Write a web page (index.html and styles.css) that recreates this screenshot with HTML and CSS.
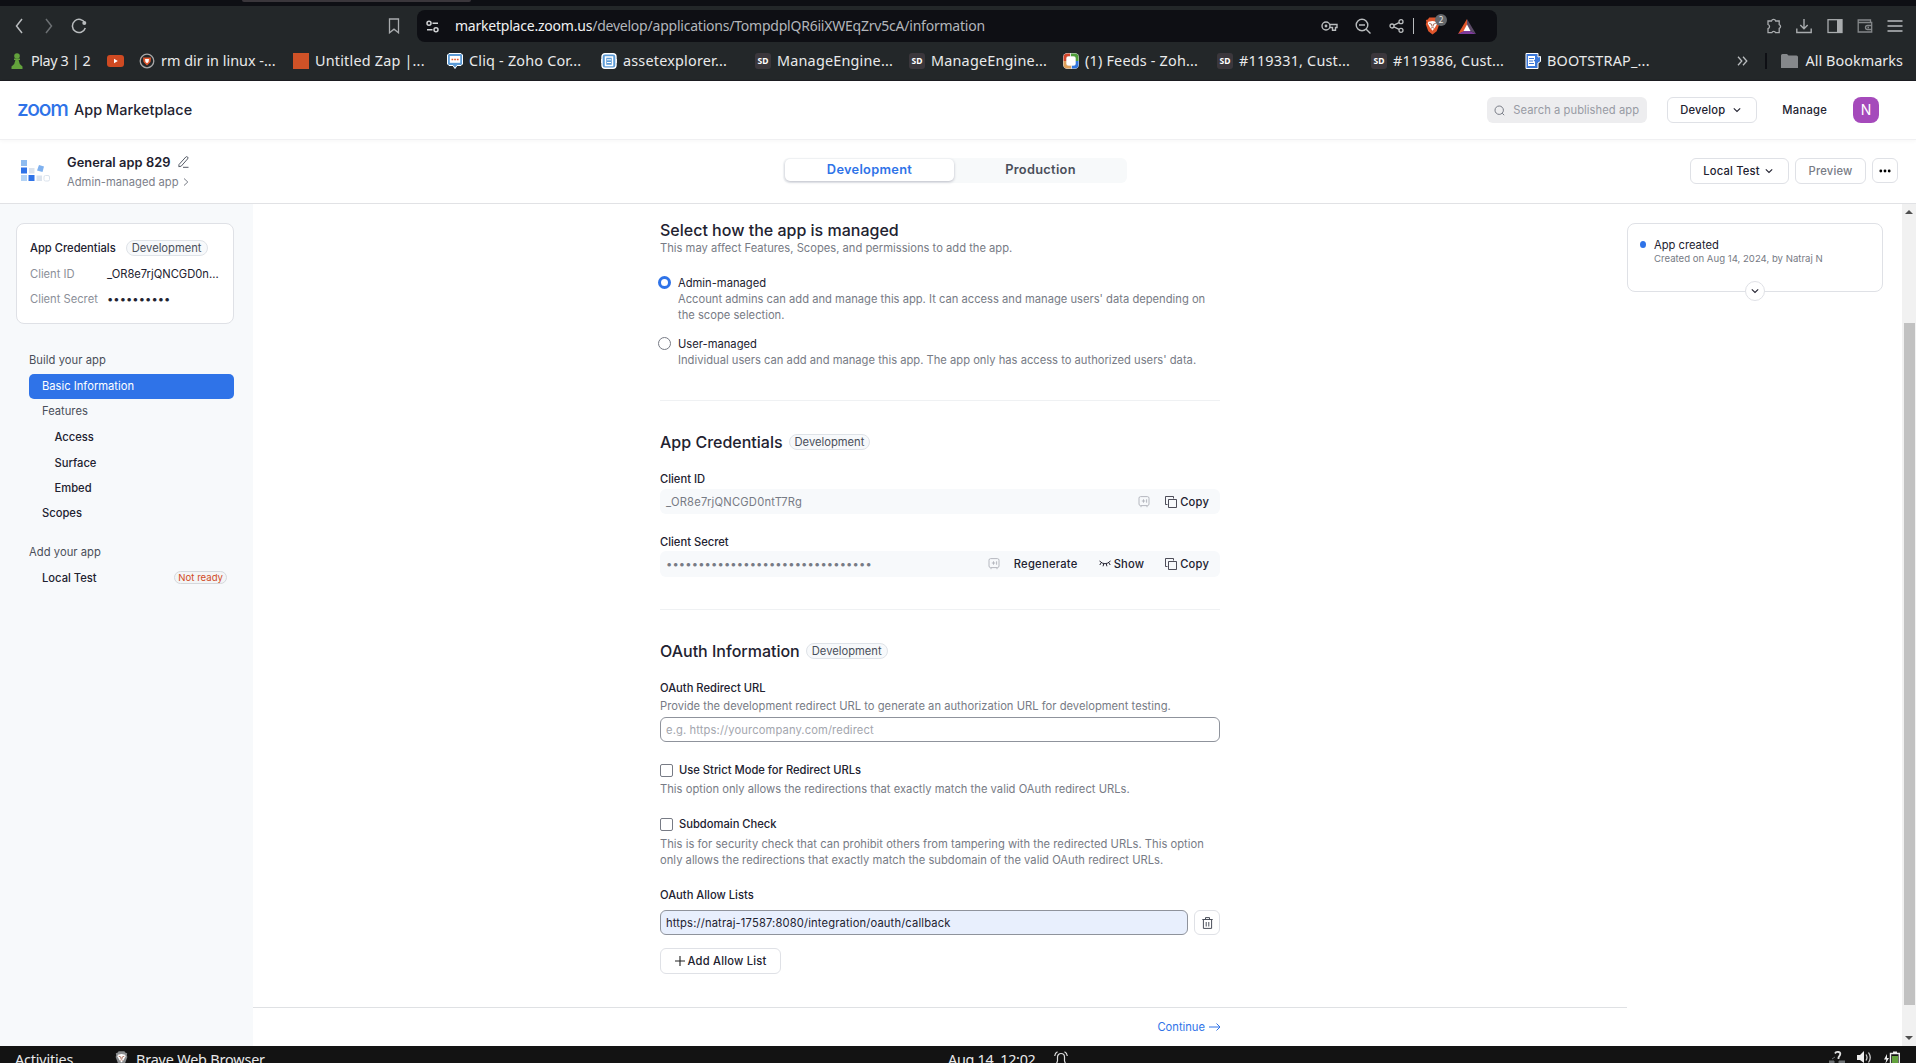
FILE: index.html
```
<!DOCTYPE html>
<html lang="en">
<head>
  <meta charset="UTF-8">
  <title>App Marketplace</title>
  <link rel="stylesheet" href="styles.css">
</head>
<body>
  <!-- icons that are used more than once -->
  <svg width="0" height="0" class="defs">
    <symbol id="chev" viewBox="0 0 10 10"><path d="M1.8 3.3L5 6.5l3.2-3.2" fill="none" stroke="currentColor" stroke-width="1.1"/></symbol>
    <symbol id="copy" viewBox="0 0 12 12"><path d="M2.500 8.500h-2V.5h8v2M3.500 3.500h8v8h-8z" fill="none" stroke="currentColor" stroke-width=".8"/></symbol>
    <symbol id="vault" viewBox="0 0 12 12"><rect x="1" y=".6" width="10" height="9" rx="1.600" fill="none" stroke="currentColor"/><path d="M3 9.800v1.400M9 9.800v1.400M3.800 5h3.400M5.500 3.300v3.400M8.600 3.300v3.400" fill="none" stroke="currentColor"/></symbol>
    <symbol id="lion" viewBox="0 0 16 18"><path d="M4.500 0h7L13 2l2 .5-.5 2.500.7 2-2.700 7.500L8 18l-4.500-3.500L.8 7l.7-2L1 2.500 3 2z"/><path d="M3.500 4.500L8 3.600l4.500.9.5 2-2.500 4.300L8 14l-2.500-3.200L3 6.500z" fill="#fff"/><path d="M4.500 6.200L7 7l.4 2.500M11.500 6.200L9 7l-.4 2.500M6.500 11.300L8 10.500l1.500.8" fill="none" stroke="#8a3b22" stroke-width=".8"/></symbol>
  </svg>

  <div class="browser">
    <div class="tabstrip"><div class="tab"></div></div>
    <div class="toolbar">
      <svg class="i-back" width="8" height="16"><path d="M7 1L1.500 8 7 15" fill="none" stroke="#b9bcbe" stroke-width="1.500"/></svg>
      <svg class="i-fwd" width="8" height="16"><path d="M1 1l5.500 7L1 15" fill="none" stroke="#6c7073" stroke-width="1.500"/></svg>
      <svg class="i-reload" width="16" height="16"><path d="M14 5.200A6.600 6.600 0 1 0 14.300 10" fill="none" stroke="#b9bcbe" stroke-width="1.500"/><circle cx="13.300" cy="5" r="2" fill="#b9bcbe"/></svg>
      <svg class="i-mark" width="12" height="16"><path d="M1.500 1h9v13.800L6 11.200l-4.500 3.600z" fill="none" stroke="#a9acae" stroke-width="1.300"/></svg>
      <div class="urlbar">
        <svg width="13" height="13"><g fill="none" stroke="#cfd1d3" stroke-width="1.500"><circle cx="3" cy="3.200" r="2"/><path d="M6.500 3.200H12M1 9.800h5.500"/><circle cx="10" cy="9.800" r="2"/></g></svg>
        <span class="url"><b>marketplace.zoom.us</b>/develop/applications/TompdplQR6iiXWEqZrv5cA/information</span>
        <div class="url-icons">
          <svg width="17" height="12"><g fill="none" stroke="#b9bcbe" stroke-width="1.400"><circle cx="5" cy="6" r="4"/><path d="M9 4.500h7v3h-1.500v2.700h-3V7.500H9"/></g><circle cx="5" cy="6" r="1.400" fill="#b9bcbe"/></svg>
          <svg width="16" height="16"><g fill="none" stroke="#b9bcbe" stroke-width="1.400"><circle cx="7" cy="7" r="5.800"/><path d="M4 7h6M11.200 11.200L15.500 15.500"/></g></svg>
          <svg width="15" height="14"><g fill="none" stroke="#b9bcbe" stroke-width="1.300"><circle cx="3" cy="7" r="2"/><circle cx="12" cy="2.700" r="2"/><circle cx="12" cy="11.300" r="2"/><path d="M4.900 6.100l5.200-2.500M4.900 7.900l5.200 2.500"/></g></svg>
          <i class="sep"></i>
          <span class="shield"><svg width="15" height="18" fill="#e0562c"><use href="#lion"/></svg><em>2</em></span>
          <svg width="18" height="15"><path d="M9 0L0 15l6-2.500 3-6z" fill="#e0562c"/><path d="M9 0l9 15-6-3-3-5.500z" fill="#5b4a66"/><path d="M0 15h18l-6-3H6z" fill="#7d3b9b"/><path d="M9 5.500l3.500 6.500h-7z" fill="#fff"/></svg>
        </div>
      </div>
      <div class="tools">
        <svg width="16" height="16"><path d="M2 3h3.500a2.200 2.200 0 0 1 4.200 0h3.500v3.600a2 2 0 0 1 0 3.800v4.300H9.600a2 2 0 0 0-3.800 0H2v-4a2.200 2.200 0 0 0 0-4.200z" fill="none" stroke="#a9acae" stroke-width="1.300"/></svg>
        <svg width="16" height="16"><path d="M8 1v9.500M4.300 7L8 10.700 11.700 7M.8 10.500v4h14.400v-4" fill="none" stroke="#a9acae" stroke-width="1.400"/></svg>
        <svg width="16" height="16"><rect x="1" y="1.700" width="14" height="12.800" fill="none" stroke="#a9acae" stroke-width="1.300"/><path d="M10 2h5v12h-5z" fill="#a9acae"/></svg>
        <svg width="16" height="16"><path d="M13.500 4.500V2H1.200v12h13.500V4.500H1.200M15 7.500h-4.500a2 2 0 0 0 0 4H15M10.500 9.500h1.500" fill="none" stroke="#85888a" stroke-width="1.300"/></svg>
        <svg width="16" height="16"><path d="M.5 3h15M.5 8h15M.5 13h15" stroke="#b9bcbe" stroke-width="1.300"/></svg>
      </div>
    </div>

    <div class="bookmarks">
      <div class="bm bm-play"><svg width="12" height="16" fill="#63a23c"><circle cx="6" cy="3" r="2.800"/><path d="M3 5.500h6V7H7.600l1.200 4 2.700 2.500V16H.5v-2.500L3.200 11l1.200-4H3z"/></svg><span>Play 3 | 2</span></div>
      <div class="bm bm-yt"><svg width="17" height="12"><rect width="17" height="12" rx="3" fill="#cf4a22"/><path d="M7 3.800v4.400L10.800 6z" fill="#fff"/></svg></div>
      <div class="bm"><svg width="16" height="16"><circle cx="8" cy="8" r="6.800" fill="none" stroke="#a7a7a7" stroke-width="1.300"/><path d="M4 4.500h8L11.500 9 8 12.500 4.500 9z" fill="#e0562c"/><path d="M6 6h4l-.5 3L8 10.300 6.500 9z" fill="#fff"/></svg><span>rm dir in linux -...</span></div>
      <div class="bm"><svg width="16" height="16"><path d="M0 0h16v16H0z" fill="#cf5227"/></svg><span>Untitled Zap |...</span></div>
      <div class="bm"><svg width="16" height="16"><path d="M2 .5h12L15.500 2v9L14 12.500h-4L8 15.500l-2-3H2L.5 11V2z" fill="#5c9bd6" stroke="#fff"/><path d="M2.800 3h10.400v6.800H2.800z" fill="#fff"/><path d="M4.500 6.500h1.700M7.200 6.500h1.700M9.900 6.500h1.700" stroke="#e0562c" stroke-width="1.500"/></svg><span>Cliq - Zoho Cor...</span></div>
      <div class="bm"><svg width="16" height="16"><rect x="1" y=".7" width="14" height="14.600" rx="3" fill="#5c9bd6" stroke="#fff" stroke-width="1.400"/><path d="M4.500 4h7v8.500h-7z" fill="#5c9bd6" stroke="#fff" stroke-width="1.500"/><path d="M6 6.800h4M6 9.500h4M.3 6v4M15.700 6v4" stroke="#fff"/></svg><span>assetexplorer...</span></div>
      <div class="bm"><i class="sd">SD</i><span>ManageEngine...</span></div>
      <div class="bm"><i class="sd">SD</i><span>ManageEngine...</span></div>
      <div class="bm"><svg width="16" height="16"><rect width="16" height="16" rx="4.500" fill="#ddd"/><path d="M2 8V4.500A2.500 2.500 0 0 1 4.500 2H7" fill="none" stroke="#d1452b" stroke-width="3"/><path d="M8 2h3.500A2.500 2.500 0 0 1 14 4.500V8" fill="none" stroke="#4e9e3a" stroke-width="3"/><path d="M14 8v3.500a2.500 2.500 0 0 1-2.500 2.500H9" fill="none" stroke="#3277e0" stroke-width="3"/><path d="M8 14H4.500A2.500 2.500 0 0 1 2 11.500V8" fill="none" stroke="#dfa05a" stroke-width="3"/><rect x="3.500" y="3.500" width="9" height="9" rx="2" fill="#fff"/></svg><span>(1) Feeds - Zoh...</span></div>
      <div class="bm"><i class="sd">SD</i><span>#119331, Cust...</span></div>
      <div class="bm"><i class="sd">SD</i><span>#119386, Cust...</span></div>
      <div class="bm"><svg width="16" height="16"><path d="M1 .5h12V4l2.500-.5v5L13 10v5.500H1z" fill="#3c78d8" stroke="#fff"/><path d="M3 3h7v10H3z" fill="#fff"/><path d="M4 5.500h5M4 8h4M4 10.500h5M9 8l4-3" stroke="#3c78d8" stroke-width="1.200"/></svg><span>BOOTSTRAP_...</span></div>
      <div class="bm-end">
        <svg width="11" height="10"><path d="M1 .8L4.800 5 1 9.200M6 .8L9.800 5 6 9.200" fill="none" stroke="#b9bcbe" stroke-width="1.300"/></svg>
        <i class="bar"></i>
        <svg width="17" height="14"><path d="M0 1.500Q0 0 1.500 0H6l1.500 1.500H15.500Q17 1.500 17 3v11H0z" fill="#85888b"/></svg>
        <span>All Bookmarks</span>
      </div>
    </div>
  </div>

  <header class="site-header">
    <span class="logo">zoom</span>
    <span class="site-name">App Marketplace</span>
    <div class="header-right">
      <div class="search"><svg width="11" height="11"><circle cx="5.200" cy="5.200" r="4.200" fill="none" stroke="#777b85"/><path d="M8.200 8.200l2 2" stroke="#777b85"/></svg><span>Search a published app</span></div>
      <button class="btn develop">Develop <svg width="10" height="10"><use href="#chev"/></svg></button>
      <a class="manage">Manage</a>
      <div class="avatar">N</div>
    </div>
  </header>

  <div class="app-header">
    <svg class="app-icon" width="30" height="23">
      <path d="M0 0h6v6H0z" fill="#8fbcf0"/><path d="M0 7.500h6v6H0zM7.500 15h6v6h-6z" fill="#2f73e8"/><path d="M0 15h6v6H0z" fill="#b3d3f5"/><path d="M8 8h5.500v5.500H8zM15.500 15.500H21V21h-5.500z" fill="#dbe3ed"/><path d="M18 5l5 1.500-1.500 5.500-5.500-1.500z" fill="#7fb1ef"/><rect x="23" y="15.500" width="5.500" height="5.500" rx="1.500" fill="#fff" stroke="#dbe3ed"/>
    </svg>
    <div class="app-title">
      <h1>General app 829 <svg width="11" height="12"><path d="M1 8.500L7.800 1q1-.8 1.800 0t0 1.900L3.200 10.200.8 10.700zM5 11.300h5.500" fill="none" stroke="#555b66"/></svg></h1>
      <p>Admin-managed app <svg width="6" height="8"><path d="M1 .5L4.800 4 1 7.500" fill="none" stroke="#777b85"/></svg></p>
    </div>
    <div class="env-tabs"><div class="on">Development</div><div>Production</div></div>
    <div class="app-actions">
      <button class="btn local">Local Test <svg width="10" height="10"><use href="#chev"/></svg></button>
      <button class="btn preview">Preview</button>
      <button class="btn more"><svg width="12" height="4"><circle cx="1.800" cy="2" r="1.400"/><circle cx="6" cy="2" r="1.400"/><circle cx="10.200" cy="2" r="1.400"/></svg></button>
    </div>
  </div>

  <div class="layout">
    <aside class="sidebar">
      <div class="cred-card">
        <h3>App Credentials <span class="badge">Development</span></h3>
        <div class="cred-row"><label>Client ID</label><span>_OR8e7rjQNCGD0n...</span></div>
        <div class="cred-row"><label>Client Secret</label><span class="dots">••••••••••</span></div>
      </div>
      <nav>
        <div class="group">Build your app</div>
        <a class="item active">Basic Information</a>
        <a class="item muted">Features</a>
        <a class="item sub">Access</a>
        <a class="item sub">Surface</a>
        <a class="item sub">Embed</a>
        <a class="item">Scopes</a>
        <div class="group second">Add your app</div>
        <a class="item">Local Test <span class="not-ready">Not ready</span></a>
      </nav>
    </aside>

    <main>
      <div class="content">
        <section class="managed">
          <h2>Select how the app is managed</h2>
          <p class="desc">This may affect Features, Scopes, and permissions to add the app.</p>
          <div class="radio-row first">
            <i class="radio checked"></i>
            <div><b>Admin-managed</b><p>Account admins can add and manage this app. It can access and manage users' data depending on<br>the scope selection.</p></div>
          </div>
          <div class="radio-row">
            <i class="radio"></i>
            <div><b>User-managed</b><p>Individual users can add and manage this app. The app only has access to authorized users' data.</p></div>
          </div>
        </section>

        <section class="credentials">
          <h2>App Credentials <span class="badge">Development</span></h2>
          <label>Client ID</label>
          <div class="field">
            <span>_OR8e7rjQNCGD0ntT7Rg</span>
            <svg class="vault" width="12" height="12"><use href="#vault"/></svg>
            <a><svg width="12" height="12"><use href="#copy"/></svg>Copy</a>
          </div>
          <label class="secret-label">Client Secret</label>
          <div class="field secret">
            <span class="dots">••••••••••••••••••••••••••••••••</span>
            <svg class="vault" width="12" height="12"><use href="#vault"/></svg>
            <a class="regen">Regenerate</a>
            <a class="show"><svg width="12" height="8"><path d="M.5 1Q6 6.500 11.500 1M2 3L.8 5M4.600 4l-.5 2.300M7.400 4l.5 2.300M10 3l1.200 2" fill="none" stroke="currentColor"/></svg>Show</a>
            <a><svg width="12" height="12"><use href="#copy"/></svg>Copy</a>
          </div>
        </section>

        <section class="oauth">
          <h2>OAuth Information <span class="badge">Development</span></h2>
          <label>OAuth Redirect URL</label>
          <p class="desc">Provide the development redirect URL to generate an authorization URL for development testing.</p>
          <input class="redirect" type="text" placeholder="e.g. https://yourcompany.com/redirect">
          <div class="check strict"><i></i><b>Use Strict Mode for Redirect URLs</b></div>
          <p class="desc">This option only allows the redirections that exactly match the valid OAuth redirect URLs.</p>
          <div class="check subdomain"><i></i><b>Subdomain Check</b></div>
          <p class="desc">This is for security check that can prohibit others from tampering with the redirected URLs. This option<br>only allows the redirections that exactly match the subdomain of the valid OAuth redirect URLs.</p>
          <label class="allow-label">OAuth Allow Lists</label>
          <div class="allow-row">
            <input class="filled" type="text" value="https://natraj-17587:8080/integration/oauth/callback">
            <button class="btn trash"><svg width="11" height="12"><path d="M.3 2.500h10.400M3.500 2.300V.6h4v1.700M1.400 2.800v8.600h8.200V2.800M4.200 5v4.500M6.800 5v4.500" fill="none" stroke="#4a4f5a"/></svg></button>
          </div>
          <button class="btn add"><svg width="10" height="10"><path d="M5 0v10M0 5h10" stroke="#222" stroke-width="1.100"/></svg>Add Allow List</button>
        </section>
      </div>
      <footer><a>Continue<svg width="12" height="8"><path d="M0 4h11M7.500.5L11 4 7.500 7.500" fill="none" stroke="currentColor"/></svg></a></footer>
    </main>

    <div class="rail">
      <div class="history">
        <i class="dot"></i>
        <div><b>App created</b><p>Created on Aug 14, 2024, by Natraj N</p></div>
        <span class="expand"><svg width="10" height="10"><use href="#chev"/></svg></span>
      </div>
    </div>

    <div class="scrollbar"><i class="up"></i><div class="thumb"></div><i class="down"></i></div>
  </div>

  <div class="taskbar">
    <span class="activities">Activities</span>
    <svg width="13" height="15" fill="#8b8d8f"><use href="#lion"/></svg>
    <span class="app-name">Brave Web Browser</span>
    <span class="clock">Aug 14&nbsp; 12:02</span>
    <svg class="bell" width="14" height="14"><path d="M2 14l1.500-4V6a3.500 3.500 0 0 1 7 0v4L12 14M.7 5Q1 2 3.500.8M13.300 5Q13 2 10.500.8" fill="none" stroke="#ddd" stroke-width="1.200"/></svg>
    <div class="tray">
      <svg width="16" height="13"><path d="M6 2.500Q7 .5 9.500 1T11 4L9.500 6.500V8" fill="none" stroke="#ddd" stroke-width="1.800"/><path d="M0 10h5v3H0zM10 10h6v3h-6zM3 8l3-2" fill="#6c7073" stroke="#6c7073"/></svg>
      <svg width="15" height="12"><path d="M0 4h3l4-4v12L3 9H0z" fill="#eee"/><path d="M9 3.500q2 3 0 6M11.500 1.500q3.500 5 0 10" fill="none" stroke="#ccc" stroke-width="1.300"/></svg>
      <svg width="16" height="13"><path d="M3 3L0 8.500h2.300L1.300 13 5 7H3z" fill="#eee"/><path d="M6.500 13V2.500h8.800V13M9 1.200h4" fill="none" stroke="#eee" stroke-width="1.400"/><path d="M8 5h6v8H8z" fill="#63a23c"/></svg>
    </div>
  </div>
</body>
</html>
```
FILE: styles.css
```
* {
  box-sizing: border-box;
}
body {
  margin: 0;
  height: 1063px;
  overflow: hidden;
  display: flex;
  flex-direction: column;
  font-family: Inter, Arial, sans-serif;
  font-size: 11.2px;
  color: #222230;
  background: #fff;
}
h1, h2, h3, p {
  margin: 0;
  font-weight: 500;
}
b {
  font-weight: 500;
}
svg {
  flex: none;
}
.defs {
  position: absolute;
}

/* browser */
.browser {
  height: 81px;
  flex: none;
  background: #232729;
  font-family: "Noto Sans", "Open Sans", sans-serif;
  color: #e9eaeb;
  border-bottom: 1px solid #1c1d22;
}
.tabstrip {
  height: 6px;
  background: #0e0f14;
}
.tab {
  width: 229px;
  height: 2px;
  margin-left: 242px;
  background: #3a363b;
  border-radius: 0 0 4px 4px;
}
.toolbar {
  height: 40px;
  display: flex;
  align-items: center;
  padding: 0 13px 0 15px;
}
.i-fwd {
  margin-left: 22px;
}
.i-reload {
  margin-left: 18px;
}
.i-mark {
  margin-left: 301px;
}
.urlbar {
  width: 1080px;
  height: 32px;
  margin-left: 17px;
  padding: 0 21px 0 9px;
  display: flex;
  align-items: center;
  background: #0e0f14;
  border-radius: 8px;
}
.url {
  margin-left: 16px;
  padding-bottom: 2px;
  font-size: 14px;
  letter-spacing: -0.22px;
  color: #b3b6bb;
  white-space: nowrap;
}
.url b {
  font-weight: 400;
  color: #f0f1f2;
}
.url-icons {
  margin-left: auto;
  display: flex;
  align-items: center;
}
.url-icons svg:nth-child(2) {
  margin: 0 18px 0 17px;
}
.url-icons .sep {
  width: 1px;
  height: 16px;
  margin: 0 11px 0 9px;
  background: #b9bcbe;
}
.shield {
  position: relative;
  display: flex;
  margin-right: 18px;
}
.shield em {
  position: absolute;
  left: 10px;
  top: -3px;
  width: 12px;
  height: 12px;
  border-radius: 6px;
  background: #63666a;
  font: 8px/12px "Noto Sans", sans-serif;
  text-align: center;
}
.tools {
  margin-left: auto;
  display: flex;
  gap: 14.2px;
}
.bookmarks {
  height: 30px;
  display: flex;
  align-items: center;
  padding: 0 13px 0 11px;
  font-size: 14.4px;
  white-space: nowrap;
}
.bookmarks span {
  padding-bottom: 2px;
}
.bm {
  width: 154px;
  flex: none;
  display: flex;
  align-items: center;
  gap: 6px;
  letter-spacing: 0.2px;
}
.bm-play {
  width: 96px;
  gap: 8px;
  letter-spacing: -0.4px;
}
.bm-yt {
  width: 32px;
}
.bm:nth-child(3) {
  letter-spacing: 0;
}
.sd {
  width: 16px;
  height: 16px;
  border-radius: 3px;
  background: #3b373c;
  font: bold 8.5px/16px "Noto Sans", sans-serif;
  letter-spacing: 0;
  text-align: center;
  color: #fff;
}
.bm-end {
  margin-left: auto;
  display: flex;
  align-items: center;
}
.bm-end .bar {
  width: 2px;
  height: 16px;
  margin: 0 14px 0 17px;
  background: #0e0f14;
}
.bm-end span {
  margin-left: 7px;
  letter-spacing: 0.05px;
}

/* site header */
.site-header {
  height: 59px;
  flex: none;
  display: flex;
  align-items: center;
  padding: 0 37px 0 17px;
  border-bottom: 1px solid #f0f0f2;
  box-shadow: 0 1px 4px rgba(0, 0, 0, 0.04);
}
.logo {
  width: 57px;
  padding-bottom: 3px;
  font-size: 21px;
  line-height: 20px;
  font-weight: 500;
  letter-spacing: -1.2px;
  color: #2f73e8;
}
.site-name {
  padding-bottom: 2px;
  font-size: 14.4px;
  font-weight: 500;
  letter-spacing: 0.05px;
}
.header-right {
  margin-left: auto;
  display: flex;
  align-items: center;
}
.search {
  width: 160px;
  height: 26px;
  display: flex;
  align-items: center;
  gap: 8px;
  padding-left: 7px;
  border-radius: 6px;
  background: #ededef;
  color: #989ba4;
  letter-spacing: 0.06px;
  white-space: nowrap;
}
.btn {
  height: 26px;
  padding: 0;
  display: flex;
  align-items: center;
  justify-content: center;
  border: 1px solid #dfe1e6;
  border-radius: 6px;
  background: #fff;
  font: 500 11.2px Inter, Arial, sans-serif;
  letter-spacing: 0.2px;
  color: #222230;
}
.develop {
  width: 90px;
  gap: 7px;
  margin-left: 20px;
  padding-right: 2px;
}
.manage {
  margin: 0 26px 0 25px;
  font-weight: 500;
  letter-spacing: 0.25px;
}
.avatar {
  width: 26px;
  height: 26px;
  border-radius: 8px;
  background: #a54abb;
  color: #fff;
  font-size: 14px;
  line-height: 26px;
  text-align: center;
}

/* app header */
.app-header {
  height: 64px;
  flex: none;
  display: grid;
  grid-template-columns: 46px 716px 344px 1fr;
  padding: 0 18px 0 21px;
  border-bottom: 1px solid #e1e2e5;
}
.app-icon {
  margin-top: 20px;
}
.app-title h1 {
  margin-top: 14px;
  font-size: 12.8px;
  line-height: 18px;
  font-weight: 600;
  letter-spacing: 0.08px;
}
.app-title h1 svg {
  margin-left: 4px;
  vertical-align: -1px;
}
.app-title p {
  line-height: 20px;
  font-weight: 400;
  color: #7c808a;
  letter-spacing: 0.02px;
}
.app-title p svg {
  margin-left: 1px;
}
.env-tabs {
  height: 25px;
  margin-top: 18px;
  padding: 1px 0 2px 2px;
  display: flex;
  background: #f7f9fa;
  border-radius: 6px;
  font-size: 12.8px;
  font-weight: 600;
  line-height: 22px;
  letter-spacing: 0.3px;
  text-align: center;
  color: #4a4f5a;
}
.env-tabs div {
  width: 173px;
  height: 22px;
}
.env-tabs .on {
  width: 169px;
  background: #fff;
  border-radius: 5px;
  color: #2f73e8;
  box-shadow: 0 1px 3px rgba(30, 30, 60, 0.28);
}
.app-actions {
  display: flex;
  justify-content: flex-end;
  gap: 6px;
  padding-top: 18px;
}
.local {
  width: 99px;
  gap: 4px;
  padding-right: 2px;
}
.preview {
  width: 71px;
  color: #777b85;
}
.more {
  width: 26px;
  height: 25px;
}

/* columns */
.layout {
  flex: 1;
  min-height: 0;
  display: flex;
}
.sidebar {
  width: 253px;
  flex: none;
  padding: 19px 19px 0 16px;
  background: #f7f9fb;
}
.cred-card {
  height: 101px;
  padding: 14px 13px 0;
  background: #fff;
  border: 1px solid #dfe1e6;
  border-radius: 8px;
}
.cred-card h3 {
  display: flex;
  align-items: center;
  gap: 10px;
  height: 20px;
  font-size: 11.2px;
  white-space: nowrap;
}
.badge {
  height: 16px;
  padding: 0 5px;
  border: 1px solid #dfe3e8;
  border-radius: 8px;
  background: #f7f9fb;
  font-size: 11.2px;
  line-height: 14px;
  font-weight: 400;
  color: #4a4f5a;
}
.cred-row {
  display: flex;
  height: 25px;
  line-height: 32px;
}
.cred-row label {
  width: 77px;
  color: #8b8f99;
}
.dots {
  font-size: 11.2px;
  letter-spacing: 0.05px;
}
nav {
  margin: 24px 0 0 13px;
}
.group {
  height: 26px;
  line-height: 25px;
  color: #4a4f5a;
  letter-spacing: 0.05px;
}
.group.second {
  margin-top: 14px;
  height: 25px;
  line-height: 23px;
}
.item {
  display: flex;
  align-items: center;
  height: 25.5px;
  padding: 0 7px 1px 13px;
  font-weight: 500;
}
.item.active {
  height: 25px;
  background: #2f73e8;
  border-radius: 5px;
  color: #fff;
  font-weight: 400;
}
.item.muted {
  color: #4a4f5a;
  font-weight: 400;
}
.item.sub {
  padding: 0 0 0 25.5px;
}
.not-ready {
  margin-left: auto;
  height: 13px;
  padding: 0 3px;
  border: 1px solid #d5d8dc;
  border-radius: 7px;
  background: #f3f5f6;
  font-size: 9.6px;
  line-height: 11px;
  font-weight: 400;
  color: #d14a1f;
}

/* main column */
main {
  width: 1375px;
  flex: none;
}
.content {
  width: 560px;
  height: 803px;
  margin-left: 407px;
}
.content h2 {
  display: flex;
  align-items: center;
  gap: 6px;
  height: 20px;
  font-size: 16px;
}
.content label {
  display: block;
  line-height: 17px;
  height: 16px;
  font-weight: 500;
}
.desc, .radio-row p {
  line-height: 16px;
  font-weight: 400;
  color: #777b85;
  white-space: nowrap;
}
.managed {
  height: 197px;
  padding-top: 16px;
  border-bottom: 1px solid #eff1f3;
}
.radio-row {
  display: flex;
  gap: 7px;
  margin: 13px 0 0 -2px;
  line-height: 16px;
}
.radio-row.first {
  margin-top: 19px;
}
.radio-row b {
  font-weight: 400;
}
.radio {
  width: 13px;
  height: 13px;
  margin-top: 1px;
  flex: none;
  border: 1px solid #777b85;
  border-radius: 50%;
}
.radio.checked {
  border: 3px solid #2f73e8;
}
.credentials {
  height: 209px;
  padding-top: 31px;
  border-bottom: 1px solid #eff1f3;
}
.credentials h2 {
  margin-bottom: 19px;
}
.field {
  height: 25px;
  margin-top: 2px;
  padding: 0 11px 0 6px;
  display: flex;
  align-items: center;
  background: #f7f9fb;
  border-radius: 6px;
  color: #777b85;
}
.field.secret {
  height: 26px;
  margin-top: 1px;
}
.field > span {
  margin-right: auto;
  letter-spacing: 0.22px;
}
.field .dots {
  letter-spacing: 0.14px;
}
.field a {
  display: flex;
  align-items: center;
  gap: 3px;
  margin-left: 15px;
  font-weight: 500;
  letter-spacing: 0.18px;
  color: #222230;
}
.field .regen {
  margin: 0 21px 0 14px;
  letter-spacing: 0.25px;
}
.field .show {
  margin: 0 6px 0 0;
}
.vault {
  color: #b5b8bf;
}
.secret-label {
  margin-top: 20px;
}
.oauth {
  padding-top: 31px;
}
.oauth h2 {
  margin-bottom: 19px;
}
.oauth .desc {
  letter-spacing: 0.015px;
}
.oauth label + .desc {
  line-height: 20px;
}
input {
  display: block;
  width: 560px;
  height: 25px;
  padding: 0 5px;
  border: 1px solid #8f939c;
  border-radius: 6px;
  font: 11.2px Inter, Arial, sans-serif;
  letter-spacing: 0.15px;
  color: #222230;
}
input::placeholder {
  color: #a3a6ae;
  letter-spacing: 0.12px;
}
.redirect {
  margin-top: 1px;
}
.check {
  display: flex;
  align-items: center;
  gap: 6px;
  height: 14px;
}
.check i {
  width: 13px;
  height: 13px;
  border: 1px solid #777b85;
  border-radius: 2px;
}
.strict {
  margin: 21px 0 4px;
}
.subdomain {
  margin: 20px 0 5px;
}
.allow-label {
  margin-top: 19px;
}
.allow-row {
  display: flex;
  gap: 6px;
  margin-top: 7px;
}
.filled {
  width: 528px;
  background: #e8effd;
}
.trash {
  width: 26px;
  height: 25px;
}
.add {
  width: 121px;
  gap: 3px;
  margin-top: 13px;
}
footer {
  height: 39px;
  padding-right: 407px;
  border-top: 1px solid #dfe1e4;
  display: flex;
  justify-content: flex-end;
  align-items: center;
}
footer a {
  display: flex;
  align-items: center;
  gap: 4px;
  color: #2f73e8;
}

/* right side */
.rail {
  width: 274px;
  flex: none;
  padding: 19px 18px 0 0;
  margin-left: -1px;
  background: #fff;
}
.history {
  position: relative;
  height: 69px;
  padding: 13px 0 0 12px;
  display: flex;
  gap: 8px;
  border: 1px solid #dfe1e6;
  border-radius: 8px;
}
.history .dot {
  width: 6px;
  height: 7px;
  margin-top: 4px;
  border-radius: 50%;
  background: #2f73e8;
}
.history b {
  font-weight: 400;
  line-height: 16px;
}
.history p {
  font-size: 9.6px;
  line-height: 12px;
  font-weight: 400;
  color: #777b85;
}
.expand {
  position: absolute;
  left: 117px;
  bottom: -10px;
  width: 20px;
  height: 20px;
  display: flex;
  align-items: center;
  justify-content: center;
  border: 1px solid #dfe1e6;
  border-radius: 50%;
  background: #fff;
}
.scrollbar {
  width: 14px;
  margin-left: 1px;
  flex: none;
  display: flex;
  flex-direction: column;
  align-items: center;
  background: #f1f1f1;
}
.thumb {
  width: 11px;
  height: 682px;
  margin: 109px 0 31px;
  background: #c1c1c1;
}
.up, .down {
  border: 4px solid transparent;
}
.up {
  margin-top: 6px;
  border-top: 0;
  border-bottom-color: #505050;
}
.down {
  border-bottom: 0;
  border-top-color: #505050;
}

/* desktop panel */
.taskbar {
  height: 17px;
  flex: none;
  overflow: hidden;
  display: grid;
  grid-template-columns: 100px 21px 812px 106px 1fr auto;
  padding: 5px 16px 0 15px;
  background: #131313;
  color: #e9eaeb;
  font: 14.4px/18px "Noto Sans", "Open Sans", sans-serif;
  white-space: nowrap;
}
.taskbar span {
  letter-spacing: -0.17px;
}
.taskbar .clock {
  letter-spacing: -0.3px;
}
.tray {
  display: flex;
  gap: 12px;
}
```
